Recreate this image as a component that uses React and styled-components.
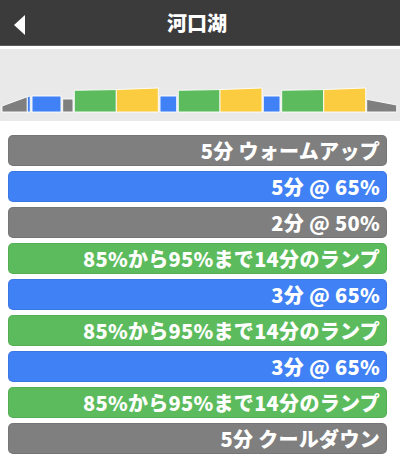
import React from "react";
import styled, { createGlobalStyle } from "styled-components";

const Global = createGlobalStyle`
  html, body { margin: 0; padding: 0; background: #ffffff; }
  body { font-family: "Noto Sans CJK JP", "Noto Sans", sans-serif; }
`;

const Page = styled.div`
  width: 400px;
  height: 474px;
  background: #ffffff;
  display: flex;
  flex-direction: column;
  overflow: hidden;
`;

const Header = styled.header`
  height: 45px;
  background: #3b3b3b;
  border-bottom: 1px solid #5c5c5c;
  display: flex;
  align-items: center;
  justify-content: center;
  position: relative;
  flex-shrink: 0;
`;

const BackButton = styled.button`
  position: absolute;
  left: 14px;
  top: 15px;
  width: 12px;
  height: 20px;
  padding: 0;
  border: 0;
  background: transparent;
  display: flex;
`;

const Title = styled.h1`
  margin: 0 6px 0 0;
  color: #ffffff;
  font-size: 20px;
  font-weight: 900;
  letter-spacing: 0;
  line-height: 1;
`;

const ChartPanel = styled.div`
  margin-top: 3px;
  height: 72px;
  background: #e9e9e9;
  flex-shrink: 0;
  display: flex;
`;

const List = styled.ul`
  list-style: none;
  margin: 0;
  padding: 14px 13px 0 8px;
  display: flex;
  flex-direction: column;
  gap: 5px;
`;

const COLORS = {
  gray: "#7f7f7f",
  blue: "#4082f6",
  green: "#5cbb5c",
  yellow: "#fbcb40",
};

const Step = styled.li`
  height: 31px;
  box-sizing: border-box;
  border-radius: 5px;
  background: ${(p) => COLORS[p.$tone]};
  box-shadow: inset 0 0 0 1px rgba(0, 0, 0, 0.08);
  display: flex;
  align-items: center;
  justify-content: flex-end;
  padding: 0 7px 0 10px;
  color: #ffffff;
  font-size: 20px;
  font-weight: 900;
  letter-spacing: 0.3px;
  white-space: nowrap;
`;

const steps = [
  { tone: "gray", label: "5分 ウォームアップ" },
  { tone: "blue", label: "5分 @ 65%" },
  { tone: "gray", label: "2分 @ 50%" },
  { tone: "green", label: "85%から95%まで14分のランプ" },
  { tone: "blue", label: "3分 @ 65%" },
  { tone: "green", label: "85%から95%まで14分のランプ" },
  { tone: "blue", label: "3分 @ 65%" },
  { tone: "green", label: "85%から95%まで14分のランプ" },
  { tone: "gray", label: "5分 クールダウン" },
];

const shapes = [
  { c: "gray", pts: "2,63 2,57 27.3,47.7 27.3,63" },
  { c: "blue", pts: "27.3,63 27.3,47.7 30.3,47 30.3,63" },
  { c: "blue", pts: "32,63 32,47 61,47 61,63" },
  { c: "gray", pts: "62.7,63 62.7,50 73,50 73,63" },
  { c: "green", pts: "74.3,63 74.3,41.3 116.3,40.6 116.3,63" },
  { c: "yellow", pts: "116.3,63 116.3,40.6 158.3,39 158.3,63" },
  { c: "blue", pts: "160,63 160,47 176.7,47 176.7,63" },
  { c: "green", pts: "178.3,63 178.3,41.3 220,40.6 220,63" },
  { c: "yellow", pts: "220,63 220,40.6 262,39 262,63" },
  { c: "blue", pts: "263.3,63 263.3,47 280,47 280,63" },
  { c: "green", pts: "281.7,63 281.7,41.3 323.7,40.6 323.7,63" },
  { c: "yellow", pts: "323.7,63 323.7,40.6 365.7,39 365.7,63" },
  { c: "gray", pts: "366.7,63 366.7,50.3 396.7,56 396.7,63" },
];

function Profile() {
  return (
    <svg width="400" height="72" viewBox="0 0 400 72">
      {shapes.map((s, i) => (
        <polygon
          key={i}
          points={s.pts}
          fill={COLORS[s.c]}
          stroke="#ffffff"
          strokeWidth="0.9"
        />
      ))}
    </svg>
  );
}

export default function App() {
  return (
    <Page>
      <Global />
      <Header>
        <BackButton aria-label="戻る">
          <svg width="12" height="20" viewBox="0 0 12 20">
            <polygon points="11,0 11,20 0,10" fill="#ffffff" />
          </svg>
        </BackButton>
        <Title>河口湖</Title>
      </Header>
      <ChartPanel>
        <Profile />
      </ChartPanel>
      <List>
        {steps.map((s, i) => (
          <Step key={i} $tone={s.tone}>
            {s.label}
          </Step>
        ))}
      </List>
    </Page>
  );
}
